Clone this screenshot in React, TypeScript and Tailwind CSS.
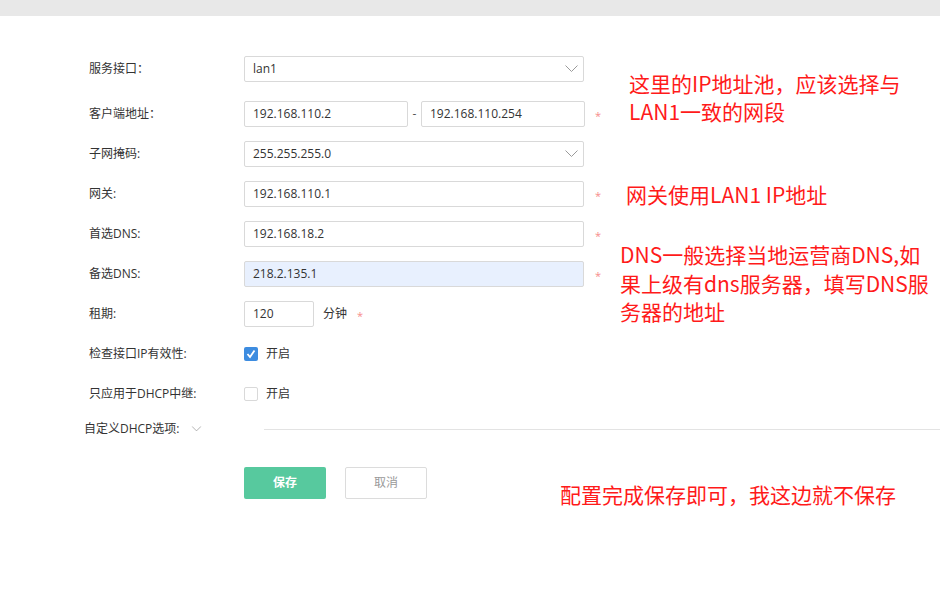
import React from "react";

const font = { fontFamily: '"Open Sans","Noto Sans CJK SC",sans-serif' };
const cjk = { fontFamily: '"Noto Sans CJK SC","Noto Sans",sans-serif' };

function Chevron({ className = "" }: { className?: string }) {
  return (
    <svg className={className} width="13" height="8" viewBox="0 0 13 8" fill="none">
      <polyline points="0.5,0.5 6.5,6.5 12.5,0.5" stroke="#9a9a9a" strokeWidth="1" />
    </svg>
  );
}

function Star() {
  return <span className="text-[11px] leading-none text-[#f78c8c] -mt-[4px]">*</span>;
}

function Label({ children }: { children: React.ReactNode }) {
  return <div className="w-[155px] shrink-0 text-[12px] text-[#333]">{children}</div>;
}

function Input({ value, w, bg = "bg-white" }: { value: string; w: string; bg?: string }) {
  return (
    <div className={`${w} ${bg} h-[26px] border border-[#d9d9d9] rounded-[2px] pl-[8px] flex items-center text-[12px] text-[#333]`}>
      {value}
    </div>
  );
}

function Select({ value }: { value: string }) {
  return (
    <div className="w-[340px] h-[26px] border border-[#d9d9d9] rounded-[2px] pl-[8px] pr-[5px] flex items-center justify-between text-[12px] text-[#333]">
      <span>{value}</span>
      <Chevron />
    </div>
  );
}

function Check({ checked }: { checked: boolean }) {
  return checked ? (
    <div className="w-[14px] h-[14px] rounded-[2px] bg-[#3d8ce0] flex items-center justify-center">
      <svg width="10" height="10" viewBox="0 0 10 10" fill="none">
        <polyline points="1.5,5 4,8 8.5,1.5" stroke="#fff" strokeWidth="1.8" />
      </svg>
    </div>
  ) : (
    <div className="w-[14px] h-[14px] rounded-[2px] border border-[#d9d9d9] bg-white" />
  );
}

export default function App() {
  return (
    <div className="relative w-[940px] h-[606px] bg-white overflow-hidden" style={font}>
      <div className="h-[16px] bg-[#e8e8e8]" />
      <div className="pl-[89px] pt-[33px]">
        <div className="h-[40px] flex items-center">
          <Label>服务接口：</Label>
          <Select value="lan1" />
        </div>
        <div className="h-[40px] mt-[5px] flex items-center">
          <Label>客户端地址：</Label>
          <Input value="192.168.110.2" w="w-[164px]" />
          <span className="w-[13px] text-center text-[12px] text-[#555]">-</span>
          <Input value="192.168.110.254" w="w-[164px]" />
          <span className="ml-[10px]"><Star /></span>
        </div>
        <div className="h-[40px] flex items-center">
          <Label>子网掩码:</Label>
          <Select value="255.255.255.0" />
        </div>
        <div className="h-[40px] flex items-center">
          <Label>网关:</Label>
          <Input value="192.168.110.1" w="w-[340px]" />
          <span className="ml-[11px]"><Star /></span>
        </div>
        <div className="h-[40px] flex items-center">
          <Label>首选DNS:</Label>
          <Input value="192.168.18.2" w="w-[340px]" />
          <span className="ml-[11px]"><Star /></span>
        </div>
        <div className="h-[40px] flex items-center">
          <Label>备选DNS:</Label>
          <Input value="218.2.135.1" w="w-[340px]" bg="bg-[#e8f0fe]" />
          <span className="ml-[11px]"><Star /></span>
        </div>
        <div className="h-[40px] flex items-center">
          <Label>租期:</Label>
          <Input value="120" w="w-[70px]" />
          <span className="ml-[9px] text-[12px] text-[#333]">分钟</span>
          <span className="ml-[10px]"><Star /></span>
        </div>
        <div className="h-[40px] flex items-center">
          <Label>检查接口IP有效性:</Label>
          <Check checked />
          <span className="ml-[8px] text-[12px] text-[#333]">开启</span>
        </div>
        <div className="h-[40px] flex items-center">
          <Label>只应用于DHCP中继:</Label>
          <Check checked={false} />
          <span className="ml-[8px] text-[12px] text-[#333]">开启</span>
        </div>
        <div className="h-[30px] -ml-[5px] flex items-center">
          <div className="w-[180px] shrink-0 flex items-center text-[12px] text-[#333]">
            <span>自定义DHCP选项:</span>
            <Chevron className="ml-[10px] scale-75" />
          </div>
          <div className="flex-1 h-px bg-[#e3e3e3]" />
        </div>
        <div className="mt-[23px] ml-[155px] flex gap-[19px]">
          <button className="w-[82px] h-[32px] rounded-[2px] bg-[#57c99e] text-white text-[12px] font-bold">保存</button>
          <button className="w-[82px] h-[32px] rounded-[2px] border border-[#dcdcdc] bg-white text-[#999] text-[12px]">取消</button>
        </div>
      </div>

      <div className="absolute left-[629px] top-[69px] text-[21px] leading-[28px] text-[#ff1a1a] whitespace-nowrap" style={cjk}>
        这里的IP地址池，应该选择与<br />LAN1一致的网段
      </div>
      <div className="absolute left-[626px] top-[180px] text-[21px] leading-[28px] text-[#ff1a1a] whitespace-nowrap" style={cjk}>
        网关使用LAN1 IP地址
      </div>
      <div className="absolute left-[620px] top-[240px] text-[21px] leading-[28.5px] text-[#ff1a1a] whitespace-nowrap" style={cjk}>
        DNS一般选择当地运营商DNS,如<br />果上级有dns服务器，填写DNS服<br />务器的地址
      </div>
      <div className="absolute left-[560px] top-[480px] text-[21px] leading-[28px] text-[#ff1a1a] whitespace-nowrap" style={cjk}>
        配置完成保存即可，我这边就不保存
      </div>
    </div>
  );
}
